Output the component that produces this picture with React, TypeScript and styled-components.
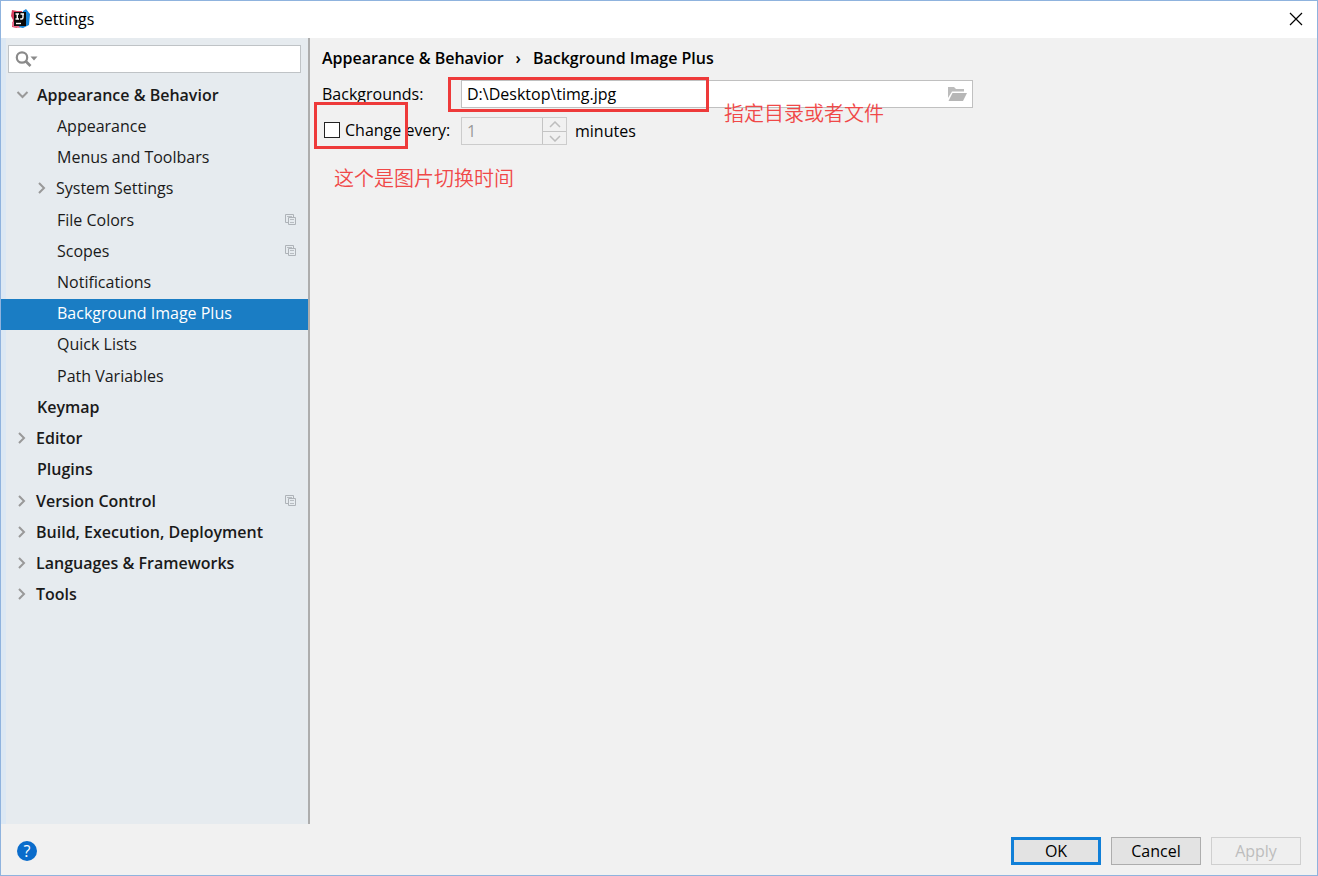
import React from "react";
import styled, { createGlobalStyle, css } from "styled-components";

const GlobalStyle = createGlobalStyle`
  *, *::before, *::after { box-sizing: border-box; }
  body { margin: 0; background: #f0f0f0; }
  body, button, input {
    font-family: "Open Sans", "Noto Sans CJK SC", sans-serif;
    font-size: 16px;
    line-height: 20px;
    color: #000;
  }
`;

const Window = styled.div`
  display: flex;
  flex-direction: column;
  min-height: 100vh;
  border: 1px solid #8fb3de;
  background: #f1f1f1;
`;

const TitleBar = styled.header`
  display: flex;
  align-items: center;
  height: 37px;
  padding: 0 14px 2px 9px;
  background: #fff;
`;

const Title = styled.h1`
  flex: 1;
  margin: 0 0 0 4px;
  font-size: 16px;
  font-weight: 400;
`;

const CloseButton = styled.button`
  display: flex;
  padding: 0;
  border: 0;
  background: none;
`;

const Body = styled.div`
  display: flex;
  flex: 1;
`;

const Sidebar = styled.aside`
  flex: none;
  width: 309px;
  border-right: 2px solid #adadad;
  background: linear-gradient(to right, #dce8f4 5px, #e6ebef 5px);
`;

const SearchBox = styled.label`
  display: flex;
  align-items: center;
  height: 28px;
  margin: 7px;
  padding-left: 6px;
  border: 1px solid #bfc3c6;
  background: #fff;
`;

const SearchInput = styled.input`
  flex: 1;
  min-width: 0;
  border: 0;
  outline: 0;
  background: none;
`;

const Tree = styled.ul`
  display: grid;
  grid-auto-rows: 1fr;
  height: 531px;
  margin: 0;
  padding: 0;
  list-style: none;
`;

const TreeRow = styled.li<{ $level: number; $selected?: boolean }>`
  display: flex;
  align-items: center;
  padding: 0 12px 2px ${(p) => 12 + p.$level * 20}px;
  font-weight: ${(p) => (p.$level === 0 ? 600 : 400)};
  color: ${(p) => (p.$selected ? "#fff" : "#1a1a1a")};
  ${(p) => p.$selected && css`background: #1a7dc4;`}
`;

const Toggle = styled.span<{ $closed: boolean }>`
  display: flex;
  flex: none;
  width: ${(p) => (p.$closed ? 23 : 24)}px;
  padding-left: 2px;
`;

const RowLabel = styled.span`
  flex: 1;
`;

const Main = styled.main`
  flex: 1;
  min-width: 0;
  padding: 0 12px;
`;

const Breadcrumb = styled.h2`
  display: flex;
  align-items: center;
  gap: 12px;
  height: 42px;
  margin: 0;
  padding-bottom: 2px;
  font-size: 16px;
  font-weight: 600;
`;

const Form = styled.form`
  display: flex;
  flex-direction: column;
  gap: 9px;
`;

const Field = styled.div`
  position: relative;
  display: grid;
  grid-template-columns: 139px minmax(0, 512px);
  align-items: center;
  height: 28px;
`;

const PathBox = styled.div`
  display: flex;
  align-items: center;
  height: 28px;
  padding: 0 5px;
  border: 1px solid #c0c0c0;
  background: #fff;
`;

const PathInput = styled.input`
  flex: 1;
  min-width: 0;
  padding: 0;
  border: 0;
  outline: 0;
  background: none;
`;

const IconButton = styled.button`
  display: flex;
  padding: 0;
  border: 0;
  background: none;
`;

const CheckLabel = styled.label`
  display: flex;
  align-items: center;
  gap: 5px;
  padding: 0 0 2px 2px;
`;

const Checkbox = styled.input`
  appearance: none;
  width: 16px;
  height: 16px;
  margin: 0;
  border: 1px solid #222;
  background: #fff;
`;

const Interval = styled.div`
  display: flex;
  align-items: center;
  gap: 8px;
`;

const Spinner = styled.div`
  display: flex;
  width: 106px;
  height: 28px;
  border: 1px solid #ccc;
`;

const SpinnerInput = styled.input`
  flex: 1;
  min-width: 0;
  padding: 0 5px;
  border: 0;
  background: none;
  color: #999;
`;

const SpinnerButtons = styled.div`
  display: grid;
  grid-template-rows: 1fr 1fr;
  width: 24px;
  border-left: 1px solid #c4c4c4;
`;

const StepButton = styled.button`
  display: flex;
  align-items: center;
  justify-content: center;
  padding: 0;
  border: 0;
  background: none;
  & + & { border-top: 1px solid #c4c4c4; }
`;

const Highlight = styled.div<{ $x: number; $y: number; $w: number; $h: number }>`
  position: absolute;
  left: ${(p) => p.$x}px;
  top: ${(p) => p.$y}px;
  width: ${(p) => p.$w}px;
  height: ${(p) => p.$h}px;
  border: 3px solid #ee3a3a;
  pointer-events: none;
`;

const Note = styled.span<{ $x: number; $y: number }>`
  position: absolute;
  left: ${(p) => p.$x}px;
  top: ${(p) => p.$y}px;
  font-family: "Noto Sans CJK SC", sans-serif;
  font-size: 20px;
  font-weight: 350;
  line-height: 24px;
  white-space: nowrap;
  color: #f04848;
`;

const Footer = styled.footer`
  display: flex;
  align-items: center;
  gap: 10px;
  height: 51px;
  padding: 2px 16px 0;
`;

const HelpButton = styled.button`
  display: flex;
  align-items: center;
  justify-content: center;
  width: 20px;
  height: 20px;
  margin-right: auto;
  padding: 0;
  border: 0;
  border-radius: 50%;
  background: #0a6ccb;
  color: #fff;
`;

const DialogButton = styled.button<{ $primary?: boolean }>`
  width: 90px;
  height: 28px;
  padding: 0;
  border: ${(p) => (p.$primary ? "3px solid #1180d8" : "1px solid #adadad")};
  background: #e3e3e3;
  &:disabled {
    border-color: #cfcfcf;
    background: #efefef;
    color: #bdbdbd;
  }
`;

const Logo = () => (
  <svg width="21" height="20" viewBox="0 0 21 20" aria-hidden="true">
    <path d="M2 1l5 1 5 0 1 8-6 9-5-1 1-7-2-4z" fill="#d8405f" />
    <path d="M13 2l3-2 4 5-1 11-6 3-5-1z" fill="#1583d8" />
    <path d="M2 13l5 0 3 6-7-1z" fill="#ec6a8c" />
    <rect x="4" y="3" width="12" height="14" fill="#0a0a0a" />
    <path d="M5.500 5h3.500M7.300 5v5M5.500 10h3.500M10.500 5h3.500M13 5v3.500q0 1.500-1.500 1.500h-1.300" fill="none" stroke="#fff" strokeWidth="1.400" />
    <path d="M6 14.500h5" stroke="#fff" strokeWidth="1.400" />
  </svg>
);

const CloseIcon = () => (
  <svg width="14" height="14" viewBox="0 0 14 14" aria-hidden="true">
    <path d="M1 1l12 12M13 1L1 13" stroke="#000" strokeWidth="1.200" />
  </svg>
);

const SearchIcon = () => (
  <svg width="23" height="16" viewBox="0 0 23 16" aria-hidden="true">
    <circle cx="7" cy="6.500" r="5.200" fill="none" stroke="#8a8a8a" strokeWidth="2.200" />
    <path d="M10.500 10l5 5" stroke="#8a8a8a" strokeWidth="2.600" />
    <path d="M15.500 5.500h7l-3.500 4z" fill="#8a8a8a" />
  </svg>
);

const Chevron = ({ open }: { open?: boolean }) => (
  <svg width="14" height="12" viewBox="0 0 14 12" aria-hidden="true">
    <path d={open ? "M2.500 3l5 5 5-5" : "M4 1l5 5-5 5"} fill="none" stroke="#999" strokeWidth="2" />
  </svg>
);

const StepIcon = ({ down }: { down?: boolean }) => (
  <svg width="12" height="7" viewBox="0 0 12 7" aria-hidden="true">
    <path d={down ? "M1 1l5 5 5-5" : "M1 6l5-5 5 5"} fill="none" stroke="#bdbdbd" strokeWidth="1.500" />
  </svg>
);

const ProjectIcon = () => (
  <svg width="11" height="11" viewBox="0 0 11 11" aria-label="For current project">
    <path d="M3 8.500H.500v-8h8V3" fill="none" stroke="#aeb3b8" />
    <path d="M3.500 3.500h7v7h-7z" fill="none" stroke="#aeb3b8" />
    <path d="M2 2.500h5M5 5.500h4M5 8.500h4" stroke="#b8bdc2" />
  </svg>
);

const FolderIcon = () => (
  <svg width="20" height="14" viewBox="0 0 20 14" aria-hidden="true">
    <path d="M1 0h6l2 2h8v2.500H5L1 11z" fill="#bcbcbc" />
    <path d="M5.500 6H20l-4 8H1.500z" fill="#b6b6b6" />
  </svg>
);

type Item = {
  label: string;
  level: number;
  toggle?: "open" | "closed";
  project?: boolean;
  selected?: boolean;
};

const items: Item[] = [
  { label: "Appearance & Behavior", level: 0, toggle: "open" },
  { label: "Appearance", level: 1 },
  { label: "Menus and Toolbars", level: 1 },
  { label: "System Settings", level: 1, toggle: "closed" },
  { label: "File Colors", level: 1, project: true },
  { label: "Scopes", level: 1, project: true },
  { label: "Notifications", level: 1 },
  { label: "Background Image Plus", level: 1, selected: true },
  { label: "Quick Lists", level: 1 },
  { label: "Path Variables", level: 1 },
  { label: "Keymap", level: 0 },
  { label: "Editor", level: 0, toggle: "closed" },
  { label: "Plugins", level: 0 },
  { label: "Version Control", level: 0, toggle: "closed", project: true },
  { label: "Build, Execution, Deployment", level: 0, toggle: "closed" },
  { label: "Languages & Frameworks", level: 0, toggle: "closed" },
  { label: "Tools", level: 0, toggle: "closed" },
];

export default function App() {
  return (
    <Window>
      <GlobalStyle />
      <TitleBar>
        <Logo />
        <Title>Settings</Title>
        <CloseButton aria-label="Close"><CloseIcon /></CloseButton>
      </TitleBar>
      <Body>
        <Sidebar>
          <SearchBox>
            <SearchIcon />
            <SearchInput type="text" aria-label="Search settings" />
          </SearchBox>
          <Tree>
            {items.map((item) => (
              <TreeRow key={item.label} $level={item.level} $selected={item.selected}>
                <Toggle $closed={item.toggle === "closed"}>
                  {item.toggle && <Chevron open={item.toggle === "open"} />}
                </Toggle>
                <RowLabel>{item.label}</RowLabel>
                {item.project && <ProjectIcon />}
              </TreeRow>
            ))}
          </Tree>
        </Sidebar>
        <Main>
          <Breadcrumb>
            <span>Appearance &amp; Behavior</span>
            <span>›</span>
            <span>Background Image Plus</span>
          </Breadcrumb>
          <Form onSubmit={(e) => e.preventDefault()}>
            <Field>
              <label htmlFor="backgrounds">Backgrounds:</label>
              <PathBox>
                <PathInput id="backgrounds" type="text" defaultValue="D:\Desktop\timg.jpg" />
                <IconButton type="button" aria-label="Browse"><FolderIcon /></IconButton>
              </PathBox>
              <Highlight $x={126} $y={-3} $w={261} $h={35} />
              <Note $x={402} $y={21}>指定目录或者文件</Note>
            </Field>
            <Field>
              <CheckLabel>
                <Checkbox type="checkbox" />
                Change every:
              </CheckLabel>
              <Interval>
                <Spinner>
                  <SpinnerInput type="text" id="interval" defaultValue="1" disabled />
                  <SpinnerButtons>
                    <StepButton type="button" aria-label="Increase" disabled><StepIcon /></StepButton>
                    <StepButton type="button" aria-label="Decrease" disabled><StepIcon down /></StepButton>
                  </SpinnerButtons>
                </Spinner>
                <label htmlFor="interval">minutes</label>
              </Interval>
              <Highlight $x={-8} $y={-15} $w={94} $h={47} />
              <Note $x={12} $y={49}>这个是图片切换时间</Note>
            </Field>
          </Form>
        </Main>
      </Body>
      <Footer>
        <HelpButton aria-label="Help">?</HelpButton>
        <DialogButton $primary>OK</DialogButton>
        <DialogButton>Cancel</DialogButton>
        <DialogButton disabled>Apply</DialogButton>
      </Footer>
    </Window>
  );
}
